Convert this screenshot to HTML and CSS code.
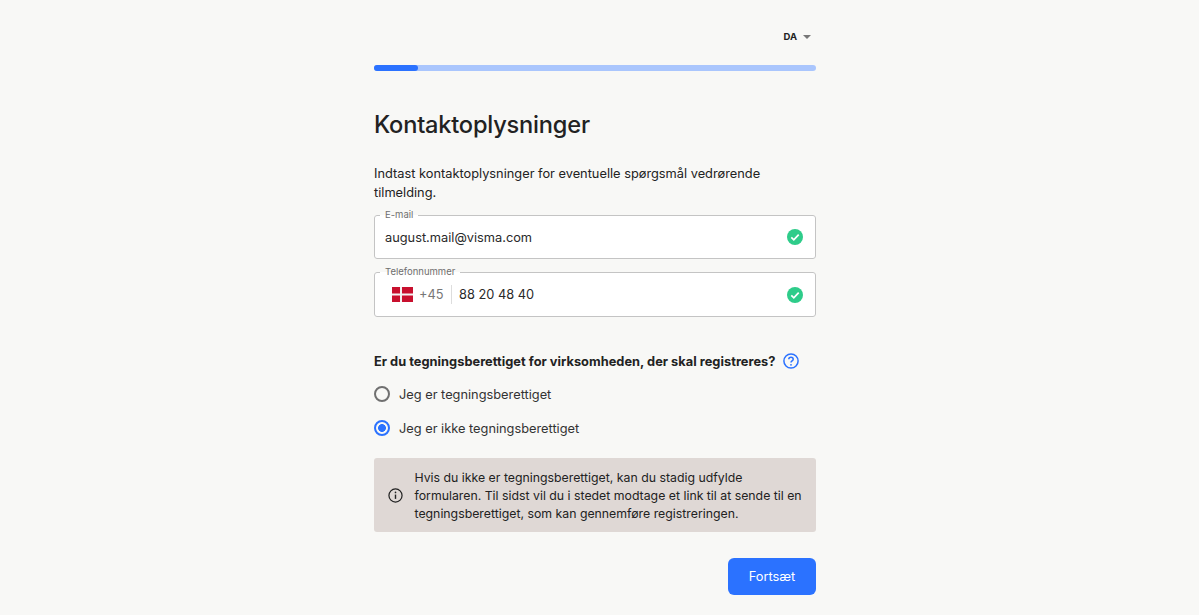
FILE: index.html
```html
<!DOCTYPE html>
<html lang="da">
<head>
  <meta charset="UTF-8" />
  <title>Kontaktoplysninger</title>
  <link rel="stylesheet" href="styles.css">
</head>
<body>
  <main class="page">
    <div class="lang">
      <span class="lang-code">DA</span>
      <span class="lang-caret"></span>
    </div>

    <div class="progress"><div class="progress-fill"></div></div>

    <h1>Kontaktoplysninger</h1>
    <p class="intro">Indtast kontaktoplysninger for eventuelle spørgsmål vedrørende tilmelding.</p>

    <fieldset class="field field-email">
      <legend>E-mail</legend>
      <span class="field-value">august.mail@visma.com</span>
      <svg class="check" viewBox="0 0 16 16" width="16" height="16"><circle cx="8" cy="8" r="8" fill="#2ecc8a"/><path d="M4.3 8.4l2.5 2.4 4.9-5.2" fill="none" stroke="#fff" stroke-width="1.7"/></svg>
    </fieldset>

    <fieldset class="field field-phone">
      <legend>Telefonnummer</legend>
      <svg class="flag" viewBox="0 0 21 15" width="21" height="15"><rect width="21" height="15" fill="#c8102e"/><rect x="8" width="2" height="15" fill="#f3f3f3"/><rect y="6.5" width="21" height="2" fill="#f3f3f3"/></svg>
      <span class="dial">+45</span>
      <span class="field-value">88 20 48 40</span>
      <svg class="check" viewBox="0 0 16 16" width="16" height="16"><circle cx="8" cy="8" r="8" fill="#2ecc8a"/><path d="M4.3 8.4l2.5 2.4 4.9-5.2" fill="none" stroke="#fff" stroke-width="1.7"/></svg>
    </fieldset>

    <div class="question">
      <span>Er du tegningsberettiget for virksomheden, der skal registreres?</span>
      <svg viewBox="0 0 16 16" width="16" height="16" fill="none" stroke="#2b72ff"><circle cx="8" cy="8" r="7.1" stroke-width="1.5"/><path d="M5.8 6.3c0-1.3 1-2.1 2.2-2.1s2.2.8 2.2 2c0 1.7-2.2 1.7-2.2 3.4" stroke-width="1.5"/><circle cx="8" cy="11.8" r=".9" fill="#2b72ff" stroke="none"/></svg>
    </div>

    <div class="radio">
      <span class="radio-dot"></span>
      <span>Jeg er tegningsberettiget</span>
    </div>
    <div class="radio radio-on">
      <span class="radio-dot"></span>
      <span>Jeg er ikke tegningsberettiget</span>
    </div>

    <div class="notice">
      <svg viewBox="0 0 16 16" width="15" height="15" fill="none" stroke="#222"><circle cx="8" cy="8" r="7" stroke-width="1.3"/><path d="M8 7v4.6" stroke-width="1.5"/><circle cx="8" cy="4.7" r=".9" fill="#222" stroke="none"/></svg>
      <p>Hvis du ikke er tegningsberettiget, kan du stadig udfylde formularen. Til sidst vil du i stedet modtage et link til at sende til en tegningsberettiget, som kan gennemføre registreringen.</p>
    </div>

    <div class="actions">
      <button class="next">Fortsæt</button>
    </div>
  </main>
</body>
</html>
```

FILE: styles.css
```css
html, body {
  margin: 0;
  height: 100%;
}
body {
  box-sizing: border-box;
  padding-right: 9px;
  background: #f8f8f6;
  color: #222;
  font-family: Inter, "Noto Sans", sans-serif;
  font-size: 12.8px;
  overflow: hidden;
}
.page {
  width: 442px;
  margin: 0 auto;
  padding-top: 30px;
}

/* language + progress */
.lang {
  display: flex;
  justify-content: flex-end;
  align-items: center;
  gap: 6px;
  height: 13px;
  padding-right: 5px;
}
.lang-code {
  font-size: 9.5px;
  font-weight: 700;
}
.lang-caret {
  width: 0;
  height: 0;
  border-left: 4px solid transparent;
  border-right: 4px solid transparent;
  border-top: 4px solid #777;
}
.progress {
  height: 6px;
  margin-top: 22px;
  border-radius: 3px;
  background: #aac6fd;
}
.progress-fill {
  width: 44px;
  height: 100%;
  border-radius: 3px;
  background: #2b72ff;
}

h1 {
  margin: 37px 0 0;
  font-size: 23.6px;
  line-height: 34px;
  font-weight: 500;
  letter-spacing: -0.2px;
}
.intro {
  margin: 22px 0 0;
  font-size: 12.8px;
  line-height: 19px;
}

/* inputs */
.field {
  display: flex;
  align-items: center;
  box-sizing: border-box;
  margin: 0;
  min-width: 0;
  padding: 0 12px 6px 10px;
  border: 1px solid #c4c4c4;
  border-radius: 3px;
  background: #fff;
}
.field legend {
  margin-left: -5px;
  padding: 0 5px 2px;
  font-size: 9.5px;
  line-height: 11px;
  color: #6f6f6f;
}
.field-value {
  flex: 1;
  font-size: 12.8px;
  color: #2a2a2a;
}
.field-email {
  height: 50px;
  margin-top: 7px;
}
.field-phone {
  height: 51px;
  margin-top: 7px;
}
.check {
  flex-shrink: 0;
}
.flag {
  margin-left: 7px;
}
.dial {
  margin-left: 6px;
  padding-right: 7px;
  border-right: 1px solid #ddd;
  line-height: 19px;
  color: #777;
}
.field-phone .field-value {
  margin-left: 7.5px;
}

/* question */
.question {
  display: flex;
  align-items: center;
  gap: 8px;
  margin-top: 35px;
  height: 18px;
  font-weight: 700;
  letter-spacing: 0.03px;
}
.radio {
  display: flex;
  align-items: center;
  gap: 9px;
  height: 16px;
  margin-top: 16px;
  color: #333;
}
.radio + .radio {
  margin-top: 18px;
}
.radio-dot {
  box-sizing: border-box;
  width: 16px;
  height: 16px;
  border: 2px solid #707070;
  border-radius: 50%;
}
.radio-on .radio-dot {
  border-color: #2b72ff;
  background: radial-gradient(circle, #2b72ff 0 3.6px, transparent 4.2px);
}

/* notice */
.notice {
  display: flex;
  align-items: center;
  gap: 11.5px;
  box-sizing: border-box;
  height: 74px;
  margin-top: 22px;
  padding: 0 13px 0 14px;
  border-radius: 3px;
  background: #dfd8d5;
}
.notice svg {
  flex-shrink: 0;
}
.notice p {
  margin: 0;
  padding-top: 2px;
  font-size: 12.3px;
  line-height: 18px;
}

.actions {
  display: flex;
  justify-content: flex-end;
  margin-top: 26px;
}
.next {
  width: 88px;
  height: 37px;
  border: none;
  border-radius: 6px;
  background: #2b72ff;
  color: #fff;
  font-family: inherit;
  font-size: 12.8px;
}
```
